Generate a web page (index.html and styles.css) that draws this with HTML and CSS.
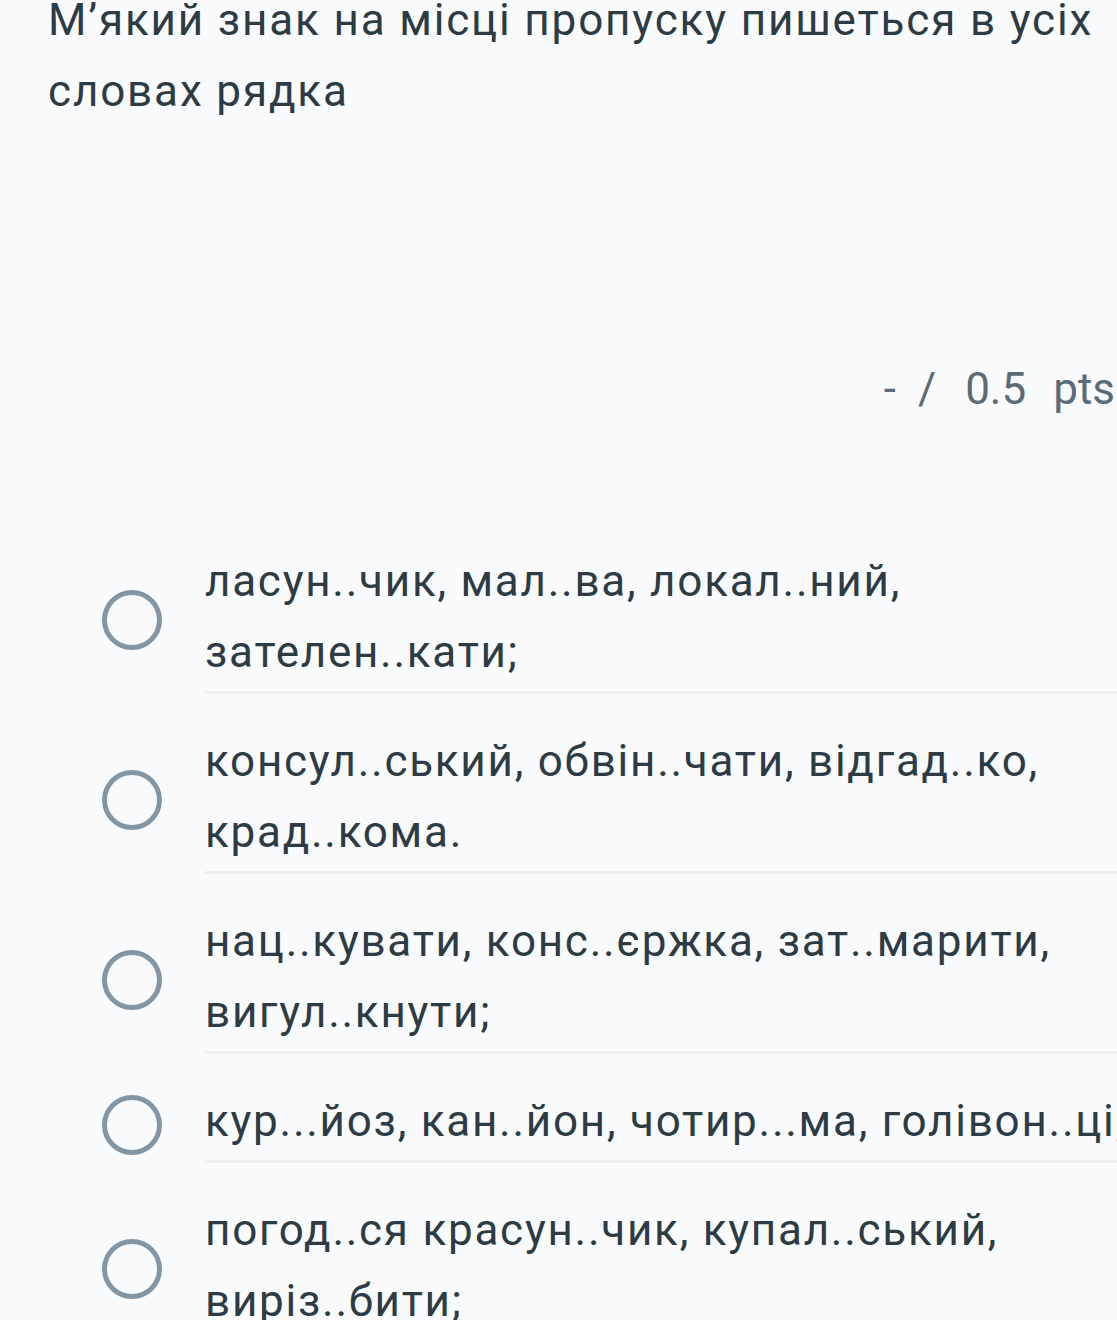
FILE: index.html
```html
<!DOCTYPE html>
<html lang="uk">
<head>
<meta charset="utf-8">
<title>Питання</title>
<link rel="stylesheet" href="styles.css">
</head>
<body>
<div class="page">
  <div class="question-text">М’який знак на місці пропуску пишеться в усіх словах рядка</div>
  <div class="points">
    <span class="pts-dash">-</span>
    <span class="pts-slash">/</span>
    <span class="pts-value">0.5</span>
    <span class="pts-unit">pts</span>
  </div>
  <div class="answers">
    <label class="answer">
      <span class="radio"></span>
      <span class="answer-text">ласун..чик, мал..ва, локал..ний, зателен..кати;</span>
    </label>
    <label class="answer">
      <span class="radio"></span>
      <span class="answer-text">консул..ський, обвін..чати, відгад..ко, крад..кома.</span>
    </label>
    <label class="answer">
      <span class="radio"></span>
      <span class="answer-text">нац..кувати, конс..єржка, зат..марити, вигул..кнути;</span>
    </label>
    <label class="answer">
      <span class="radio"></span>
      <span class="answer-text nowrap">кур...йоз, кан..йон, чотир...ма, голівон..ці;</span>
    </label>
    <label class="answer">
      <span class="radio"></span>
      <span class="answer-text">погод..ся красун..чик, купал..ський, виріз..бити;</span>
    </label>
  </div>
</div>
</body>
</html>
```
FILE: styles.css
```css
html, body {
  margin: 0;
  padding: 0;
  background: #f9fafb;
  overflow: hidden;
}

body {
  font-family: Roboto, "Noto Sans", "Liberation Sans", sans-serif;
  color: #2d3b45;
  font-size: 44px;
  line-height: 71px;
}

.page {
  width: 1102px;
  padding-left: 48px;
}

.question-text {
  margin-top: -15px;
  width: 1100px;
  letter-spacing: 1.85px;
}

.points {
  margin-top: 227px;
  width: 1067px;
  display: flex;
  justify-content: flex-end;
  gap: 22px;
  color: #5b6b77;
  white-space: nowrap;
}

.pts-value {
  margin-left: 7px;
}

.pts-unit {
  margin-left: 5px;
}

.answers {
  margin-top: 89px;
}

.answer {
  display: flex;
  align-items: center;
  padding-top: 32px;
}

.radio {
  flex: none;
  width: 60px;
  height: 60px;
  box-sizing: border-box;
  border: 5px solid #8396a5;
  border-radius: 50%;
  margin-left: 54px;
  margin-right: 43px;
}

.answer-text {
  flex: 1;
  padding-bottom: 3px;
  border-bottom: 3px solid #eceef0;
  letter-spacing: 1.75px;
}

.nowrap {
  white-space: nowrap;
}
```
